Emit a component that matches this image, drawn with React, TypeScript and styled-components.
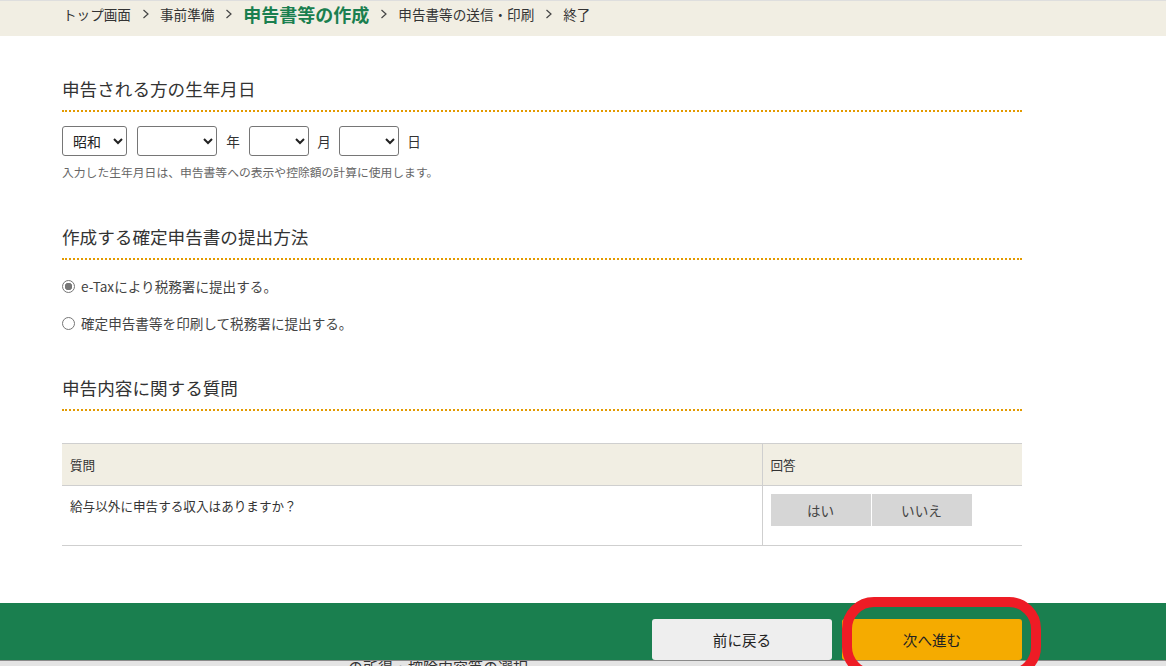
import React from "react";
import styled, { createGlobalStyle } from "styled-components";

const GlobalStyle = createGlobalStyle`
  html, body {
    margin: 0;
    padding: 0;
    background: #fff;
  }
  body {
    font-family: "Noto Sans CJK JP", "Liberation Sans", sans-serif;
    color: #333;
  }
`;

const appColors = {
  band: "#f1eee3",
  green: "#1a7f4f",
  orange: "#f5ab00",
  dotted: "#e39a00",
  line: "#cfcfcf",
};

const Page = styled.div`
  position: relative;
  width: 1166px;
  height: 666px;
  display: flex;
  flex-direction: column;
  overflow: hidden;
`;

const Steps = styled.nav`
  flex: none;
  height: 36px;
  box-sizing: border-box;
  border-top: 1px solid #dedede;
  background: ${appColors.band};
  padding-left: 63px;
  display: flex;
  align-items: flex-start;
`;

const Step = styled.span<{ $active?: boolean }>`
  font-size: ${(p) => (p.$active ? "18px" : "13.6px")};
  font-weight: ${(p) => (p.$active ? 700 : 400)};
  color: ${(p) => (p.$active ? appColors.green : "#333")};
  line-height: 26px;
  white-space: nowrap;
`;

const Chevron = styled.svg`
  flex: none;
  width: 8px;
  height: 10px;
  margin: 8px 10px 0 11px;
`;

const Main = styled.main`
  flex: 1;
  width: 960px;
  margin-left: 62px;
`;

const Section = styled.section<{ $top: number }>`
  margin-top: ${(p) => p.$top}px;
`;

const Heading = styled.h2`
  margin: 0;
  height: 34px;
  font-size: 17.6px;
  font-weight: 400;
  line-height: 26px;
  color: #333;
  border-bottom: 2px dotted ${appColors.dotted};
`;

const DateRow = styled.div`
  display: flex;
  align-items: center;
  margin-top: 14px;
  height: 30px;
`;

const DateSelect = styled.select<{ $w: number }>`
  width: ${(p) => p.$w}px;
  height: 30px;
  box-sizing: border-box;
  padding-left: 6px;
  border: 1px solid #767676;
  border-radius: 3px;
  background: #fff;
  font-family: inherit;
  font-size: 14px;
  color: #222;
`;

const DateUnit = styled.span`
  width: 32px;
  text-align: center;
  font-size: 13.6px;
  color: #333;
`;

const Note = styled.p`
  margin: 6px 0 0;
  font-size: 11.8px;
  line-height: 20px;
  color: #666;
`;

const RadioRow = styled.label<{ $top: number }>`
  display: flex;
  align-items: center;
  gap: 6px;
  margin-top: ${(p) => p.$top}px;
  height: 20px;
  font-size: 13.6px;
  color: #444;
`;

const Radio = styled.input.attrs({ type: "radio" })`
  appearance: none;
  flex: none;
  width: 13px;
  height: 13px;
  margin: 0;
  border: 1px solid #767676;
  border-radius: 50%;
  background: #fff;
  &:checked {
    background: radial-gradient(circle, #767676 0 3.5px, #fff 4px);
  }
`;

const QuestionTable = styled.table`
  width: 960px;
  margin-top: 32px;
  border-collapse: collapse;
  table-layout: fixed;
  font-size: 12.6px;
  color: #333;
  border-top: 1px solid ${appColors.line};
  border-bottom: 1px solid ${appColors.line};
`;

const HeadCell = styled.th`
  height: 41px;
  padding: 0 8px;
  background: ${appColors.band};
  font-weight: 400;
  text-align: left;
  border-bottom: 1px solid ${appColors.line};
  & + & {
    border-left: 1px solid ${appColors.line};
  }
`;

const BodyCell = styled.td`
  height: 60px;
  padding: 8px;
  box-sizing: border-box;
  vertical-align: top;
  line-height: 24px;
  & + & {
    border-left: 1px solid ${appColors.line};
  }
`;

const Answers = styled.div`
  display: flex;
  gap: 1px;
`;

const AnswerButton = styled.button`
  width: 100px;
  height: 32px;
  padding: 0;
  border: none;
  background: #d6d6d6;
  font-family: inherit;
  font-size: 13.6px;
  color: #444;
`;

const Footer = styled.footer`
  flex: none;
  height: 57px;
  background: ${appColors.green};
  box-sizing: border-box;
  padding: 16px 144px 0 0;
  display: flex;
  justify-content: flex-end;
  gap: 10px;
`;

const FooterButton = styled.button<{ $primary?: boolean }>`
  width: 180px;
  height: 41px;
  padding: 0;
  border: none;
  border-radius: 3px;
  background: ${(p) => (p.$primary ? appColors.orange : "#eeeeee")};
  font-family: inherit;
  font-size: 14.6px;
  color: #222;
`;

const Behind = styled.div`
  flex: none;
  height: 5px;
  overflow: hidden;
  background: #e4e4e4;
  border-top: 1px solid #8a8a8a;
  padding-left: 348px;
  font-size: 15px;
  line-height: 12px;
  color: #333;
  white-space: nowrap;
`;

const Annotation = styled.div`
  position: absolute;
  left: 842px;
  top: 597px;
  width: 199px;
  height: 82px;
  box-sizing: border-box;
  border: 10px solid #ee1c25;
  border-radius: 32px;
  pointer-events: none;
`;

const StepArrow = () => (
  <Chevron viewBox="0 0 8 10">
    <path d="M1.5 1 L6 5 L1.5 9" fill="none" stroke="#444" strokeWidth="1.2" />
  </Chevron>
);

export default function App() {
  return (
    <Page>
      <GlobalStyle />
      <Steps>
        <Step>トップ画面</Step>
        <StepArrow />
        <Step>事前準備</Step>
        <StepArrow />
        <Step $active>申告書等の作成</Step>
        <StepArrow />
        <Step>申告書等の送信・印刷</Step>
        <StepArrow />
        <Step>終了</Step>
      </Steps>
      <Main>
        <Section $top={40}>
          <Heading>申告される方の生年月日</Heading>
          <DateRow>
            <DateSelect $w={65} defaultValue="showa">
              <option value="showa">昭和</option>
            </DateSelect>
            <DateUnit style={{ width: 10 }} />
            <DateSelect $w={80}>
              <option>&nbsp;</option>
            </DateSelect>
            <DateUnit>年</DateUnit>
            <DateSelect $w={60}>
              <option>&nbsp;</option>
            </DateSelect>
            <DateUnit style={{ width: 30 }}>月</DateUnit>
            <DateSelect $w={60}>
              <option>&nbsp;</option>
            </DateSelect>
            <DateUnit style={{ width: 30 }}>日</DateUnit>
          </DateRow>
          <Note>入力した生年月日は、申告書等への表示や控除額の計算に使用します。</Note>
        </Section>
        <Section $top={42}>
          <Heading>作成する確定申告書の提出方法</Heading>
          <RadioRow $top={16}>
            <Radio name="method" defaultChecked />
            e-Taxにより税務署に提出する。
          </RadioRow>
          <RadioRow $top={17}>
            <Radio name="method" />
            確定申告書等を印刷して税務署に提出する。
          </RadioRow>
        </Section>
        <Section $top={42}>
          <Heading>申告内容に関する質問</Heading>
          <QuestionTable>
            <colgroup>
              <col style={{ width: 700 }} />
              <col />
            </colgroup>
            <thead>
              <tr>
                <HeadCell>質問</HeadCell>
                <HeadCell>回答</HeadCell>
              </tr>
            </thead>
            <tbody>
              <tr>
                <BodyCell>給与以外に申告する収入はありますか？</BodyCell>
                <BodyCell>
                  <Answers>
                    <AnswerButton>はい</AnswerButton>
                    <AnswerButton>いいえ</AnswerButton>
                  </Answers>
                </BodyCell>
              </tr>
            </tbody>
          </QuestionTable>
        </Section>
      </Main>
      <Footer>
        <FooterButton>前に戻る</FooterButton>
        <FooterButton $primary>次へ進む</FooterButton>
      </Footer>
      <Behind>の所得・控除内容等の選択</Behind>
      <Annotation />
    </Page>
  );
}
